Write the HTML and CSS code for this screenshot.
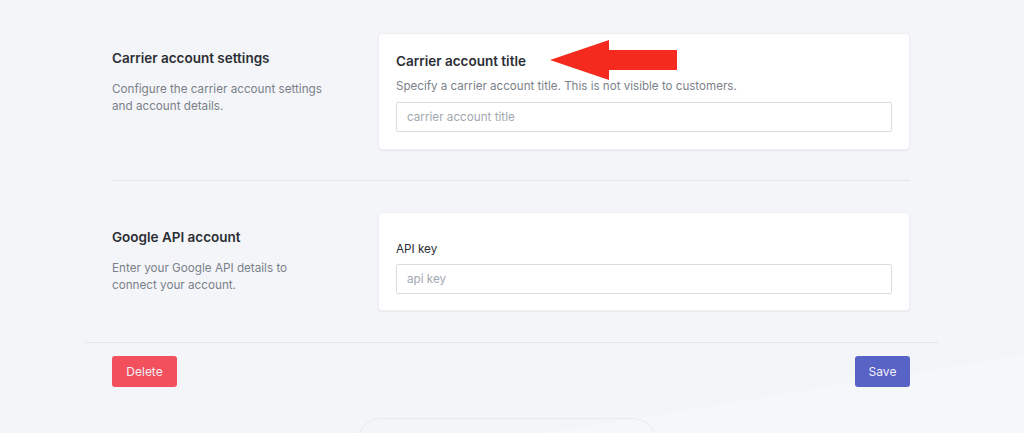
FILE: index.html
```html
<!DOCTYPE html>
<html lang="en">
<head>
<meta charset="utf-8">
<title>Carrier account</title>
<link rel="stylesheet" href="styles.css">
</head>
<body>
<div class="page">
  <div class="inner">
    <section class="section">
      <div class="aside">
        <h2 class="aside-title">Carrier account settings</h2>
        <p class="aside-desc">Configure the carrier account settings<br>and account details.</p>
      </div>
      <div class="card">
        <h3 class="card-title">Carrier account title</h3>
        <p class="card-desc">Specify a carrier account title. This is not visible to customers.</p>
        <input class="field" type="text" placeholder="carrier account title">
        <svg class="arrow" width="128" height="41" viewBox="0 0 128 41" aria-hidden="true">
          <polygon points="0,20 59,0 59,10 127,10 127,30 59,30 59,40" fill="#f42a1f"/>
        </svg>
      </div>
    </section>
    <hr class="divider">
    <section class="section">
      <div class="aside">
        <h2 class="aside-title">Google API account</h2>
        <p class="aside-desc">Enter your Google API details to<br>connect your account.</p>
      </div>
      <div class="card card-api">
        <label class="label" for="api">API key</label>
        <input id="api" class="field" type="text" placeholder="api key">
      </div>
    </section>
  </div>
  <div class="footer">
    <button class="btn btn-delete" type="button">Delete</button>
    <button class="btn btn-save" type="button">Save</button>
  </div>
  <div class="bottom-tab"></div>
</div>
</body>
</html>
```

FILE: styles.css
```css
html, body {
  margin: 0;
  padding: 0;
  height: 100%;
  overflow: hidden;
}

body {
  background: linear-gradient(170.7deg, #f4f5f8 87%, #f6f7f9 87%);
  font-family: Inter, "Noto Sans", "Liberation Sans", sans-serif;
  color: #2b2e35;
}

.page {
  width: 853px;
  margin: 0 0 0 85px;
  display: flex;
  flex-direction: column;
}

.inner {
  padding: 33px 28px 0 27px;
}

.section {
  display: flex;
  align-items: flex-start;
}

.aside {
  width: 266px;
  padding-top: 15px;
  flex: none;
}

.aside-title {
  margin: 0;
  font-size: 13.5px;
  line-height: 20px;
  font-weight: 600;
  color: #2b2e35;
}

.aside-desc {
  margin: 13px 0 0;
  font-size: 11.7px;
  line-height: 17px;
  color: #7b818a;
}

.card {
  position: relative;
  flex: 1;
  background: #fff;
  border: 1px solid #eceef1;
  border-radius: 4px;
  box-shadow: 0 1px 2px rgba(30, 40, 60, 0.06);
  padding: 17px;
  display: flex;
  flex-direction: column;
}

.card-title {
  margin: 0;
  font-size: 13.5px;
  line-height: 20px;
  font-weight: 600;
  color: #2b2e35;
}

.card-desc {
  margin: 6px 0 7px;
  font-size: 11.6px;
  line-height: 18px;
  color: #7b818a;
}

.field {
  box-sizing: border-box;
  height: 30px;
  width: 100%;
  margin: 0;
  border: 1px solid #d9dce1;
  border-radius: 2px;
  padding: 0 10px;
  font-family: inherit;
  font-size: 11.7px;
  color: #2b2e35;
  background: #fff;
}

.field::placeholder {
  color: #a3a8b0;
}

.arrow {
  position: absolute;
  left: 171px;
  top: 6px;
}

.card-api {
  padding-top: 27px;
  padding-bottom: 16px;
}

.label {
  font-size: 11.7px;
  line-height: 18px;
  color: #2b2e35;
  margin-bottom: 6px;
}

.divider {
  border: 0;
  border-top: 1px solid #e3e5e9;
  margin: 30px 0 31px;
}

.footer {
  border-top: 1px solid #e3e5e9;
  margin-top: 31px;
  padding: 13px 28px 0 27px;
  display: flex;
  justify-content: space-between;
}

.btn {
  height: 31px;
  border: 0;
  border-radius: 3px;
  font-family: inherit;
  font-size: 12px;
  color: #f3f0f6;
  padding: 0;
  cursor: pointer;
}

.btn-delete {
  background: #f2505d;
  width: 65px;
}

.btn-save {
  background: #5863c6;
  width: 55px;
}

.bottom-tab {
  align-self: center;
  margin-top: 31px;
  margin-left: -10px;
  width: 300px;
  height: 60px;
  border: 1px solid #e8eaee;
  border-radius: 24px;
  box-sizing: border-box;
}
```
